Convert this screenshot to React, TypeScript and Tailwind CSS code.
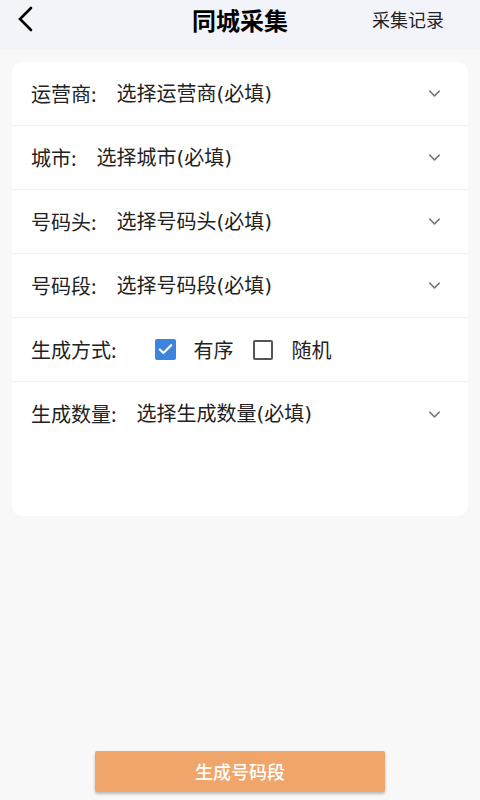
import { ChevronDown, Check } from "lucide-react";

const font = { fontFamily: '"Noto Sans CJK SC", "Noto Sans", sans-serif' };
const valueFont = { fontFamily: '"DejaVu Sans", "Noto Sans CJK SC", sans-serif' };

function SelectRow({ label, value, last }: { label: string; value: string; last?: boolean }) {
  return (
    <div className={`flex items-center h-[64px] pl-[19px] pr-[24px] ${last ? "" : "border-b border-[#f1f1f1]"}`}>
      <span className="text-[20px] text-[#222] mr-[20px]">{label}</span>
      <span className="text-[20px] text-[#222] flex-1" style={valueFont}>{value}</span>
      <ChevronDown className="w-[19px] h-[19px] text-[#777]" strokeWidth={1.8} />
    </div>
  );
}

export default function App() {
  return (
    <div className="w-[480px] h-[800px] bg-[#f8f8f8] flex flex-col" style={font}>
      <div className="h-[50px] bg-[#f3f4f9] flex items-center relative pb-[12px]">
        <svg className="ml-[16px] w-[18px] h-[26px]" viewBox="0 0 18 26" fill="none">
          <path d="M15 2 L4 13 L15 24" stroke="#000" strokeWidth={2.6} strokeLinecap="round" strokeLinejoin="miter" />
        </svg>
        <div className="absolute left-0 right-0 text-center text-[24px] font-bold text-black top-[2px] pointer-events-none">同城采集</div>
        <span className="ml-auto mr-[36px] text-[18px] text-[#222]">采集记录</span>
      </div>

      <div className="mx-[12px] mt-[12px] h-[454px] bg-white rounded-[10px]">
        <SelectRow label="运营商:" value="选择运营商(必填)" />
        <SelectRow label="城市:" value="选择城市(必填)" />
        <SelectRow label="号码头:" value="选择号码头(必填)" />
        <SelectRow label="号码段:" value="选择号码段(必填)" />
        <div className="flex items-center h-[64px] border-b border-[#f1f1f1] pl-[19px]">
          <span className="text-[20px] text-[#222] mr-[38px]">生成方式:</span>
          <div className="w-[21px] h-[21px] rounded-[2px] bg-[#3d82dc] flex items-center justify-center">
            <Check className="w-[17px] h-[17px] text-white" strokeWidth={3} />
          </div>
          <span className="text-[20px] text-[#222] ml-[18px]">有序</span>
          <div className="w-[20px] h-[20px] rounded-[2px] border-2 border-[#555] ml-[19px]" />
          <span className="text-[20px] text-[#222] ml-[19px]">随机</span>
        </div>
        <SelectRow label="生成数量:" value="选择生成数量(必填)" last />
      </div>

      <div className="mt-auto mb-[8px] flex justify-center">
        <button className="w-[290px] h-[41px] bg-[#f0a56a] rounded-[2px] text-white text-[18px] font-medium shadow-[0_2px_3px_rgba(0,0,0,0.25)]">
          生成号码段
        </button>
      </div>
    </div>
  );
}
